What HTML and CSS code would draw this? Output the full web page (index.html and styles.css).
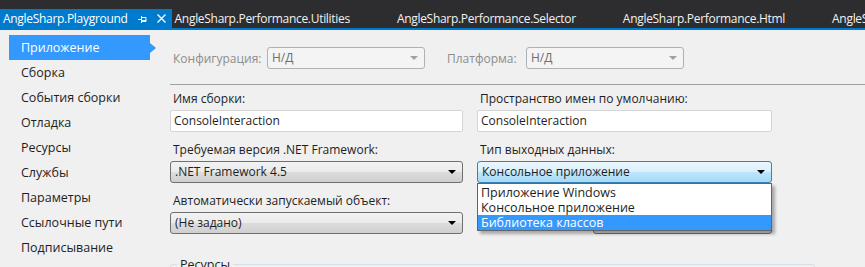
FILE: index.html
```html
<!DOCTYPE html>
<html lang="ru">
<head>
    <meta charset="UTF-8">
    <title>AngleSharp.Playground</title>
    <link rel="stylesheet" href="styles.css">
</head>
<body>
    <div class="tabbar">
        <div class="tab active">
            <span class="tab-title">AngleSharp.Playground</span>
            <span class="tab-icons">
                <svg class="pin" width="9" height="8" viewBox="0 0 9 8"><path d="M0 4.5h3.5M3.5 1v7M3.5 2.5h4.5v4h-4.5M4 5.5h4" fill="none" stroke="#fff" stroke-width="1"/></svg>
                <svg class="close" width="9" height="9" viewBox="0 0 9 9"><path d="M0.5 0.5l8 8M8.5 0.5l-8 8" stroke="#fff" stroke-width="1.4"/></svg>
            </span>
        </div>
        <div class="tab"><span class="tab-title">AngleSharp.Performance.Utilities</span><span class="tab-icons"></span></div>
        <div class="tab"><span class="tab-title">AngleSharp.Performance.Selector</span><span class="tab-icons"></span></div>
        <div class="tab"><span class="tab-title">AngleSharp.Performance.Html</span><span class="tab-icons"></span></div>
        <div class="tab"><span class="tab-title">AngleSharp.Performance.Css</span><span class="tab-icons"></span></div>
    </div>

    <div class="page">
        <ul class="sidebar">
            <li class="nav-item selected">Приложение</li>
            <li class="nav-item">Сборка</li>
            <li class="nav-item">События сборки</li>
            <li class="nav-item">Отладка</li>
            <li class="nav-item">Ресурсы</li>
            <li class="nav-item">Службы</li>
            <li class="nav-item">Параметры</li>
            <li class="nav-item">Ссылочные пути</li>
            <li class="nav-item">Подписывание</li>
        </ul>

        <div class="main">
            <div class="config-row">
                <span class="config-label">Конфигурация:</span>
                <div class="combo disabled config-combo">Н/Д</div>
                <span class="config-label platform-label">Платформа:</span>
                <div class="combo disabled config-combo">Н/Д</div>
            </div>
            <div class="separator"></div>

            <div class="fields">
                <div class="field">
                    <label>Имя сборки:</label>
                    <div class="textbox">ConsoleInteraction</div>
                </div>
                <div class="field">
                    <label>Пространство имен по умолчанию:</label>
                    <div class="textbox">ConsoleInteraction</div>
                </div>
                <div class="field">
                    <label>Требуемая версия .NET Framework:</label>
                    <div class="combo">.NET Framework 4.5</div>
                </div>
                <div class="field output-field">
                    <label>Тип выходных данных:</label>
                    <div class="combo focused">Консольное приложение</div>
                    <ul class="dropdown">
                        <li>Приложение Windows</li>
                        <li>Консольное приложение</li>
                        <li class="highlight">Библиотека классов</li>
                    </ul>
                </div>
                <div class="field">
                    <label>Автоматически запускаемый объект:</label>
                    <div class="combo">(Не задано)</div>
                </div>
                <div class="field button-field">
                    <button class="info-btn">Сведения о сборке...</button>
                </div>
            </div>

            <fieldset class="group">
                <legend>Ресурсы</legend>
            </fieldset>
        </div>
    </div>
</body>
</html>
```

FILE: styles.css
```css
* {
    margin: 0;
    padding: 0;
    box-sizing: border-box;
}

body {
    font-family: 'Open Sans', 'Noto Sans', sans-serif;
    font-size: 12px;
    color: #1e1e1e;
    background: #f0f0f0;
    width: 865px;
    height: 267px;
    overflow: hidden;
}

/* tabs */
.tabbar {
    height: 30px;
    background: #2d2d30;
    border-bottom: 2px solid #007acc;
    display: flex;
    align-items: flex-end;
    white-space: nowrap;
    overflow: hidden;
}

.tab {
    display: flex;
    align-items: center;
    height: 19px;
    padding-left: 3px;
    color: #f1f1f1;
    font-size: 12px;
    letter-spacing: -0.3px;
    flex-shrink: 0;
}

.tab.active {
    background: #007acc;
    color: #fff;
}

.tab-icons {
    width: 44px;
    height: 19px;
    display: flex;
    align-items: center;
    padding-left: 10px;
}

.tab-icons .close {
    margin-left: 10px;
}

/* layout */
.page {
    display: flex;
    height: 237px;
    overflow: hidden;
}

.sidebar {
    list-style: none;
    width: 170px;
    padding: 5px 0 0 9px;
    flex-shrink: 0;
}

.nav-item {
    position: relative;
    width: 141px;
    height: 25px;
    line-height: 25px;
    padding-left: 12px;
    font-size: 12.5px;
}

.nav-item.selected {
    background: #3399ff;
    color: #fff;
}

.nav-item.selected::after {
    content: '';
    position: absolute;
    right: -6px;
    top: 8px;
    border-left: 6px solid #3399ff;
    border-top: 5px solid transparent;
    border-bottom: 5px solid transparent;
}

.main {
    flex: 1;
    padding-top: 17px;
}

.config-row {
    display: flex;
    align-items: center;
    height: 22px;
}

.config-label {
    color: #8d8d8d;
    padding-left: 3px;
    width: 97px;
}

.platform-label {
    width: 79px;
    padding-left: 22px;
    box-sizing: content-box;
}

.combo {
    position: relative;
    height: 22px;
    line-height: 20px;
    padding-left: 4px;
    border: 1px solid #707070;
    border-radius: 3px;
    background: linear-gradient(#f2f2f2 0%, #ebebeb 50%, #dddddd 50%, #cfcfcf 100%);
    white-space: nowrap;
}

.combo::after {
    content: '';
    position: absolute;
    right: 6px;
    top: 8px;
    border-top: 4px solid #000;
    border-left: 4px solid transparent;
    border-right: 4px solid transparent;
}

.combo.disabled {
    background: #f4f4f4;
    border-color: #adb2b5;
    color: #6d6d6d;
}

.combo.disabled::after {
    border-top-color: #a0a0a0;
    right: 6px;
}

.config-combo {
    width: 158px;
}

.combo.focused {
    border-color: #3c7fb1;
    background: linear-gradient(#eaf6fd 0%, #d9f0fc 50%, #bee6fd 50%, #a7d9f5 100%);
}

.separator {
    height: 1px;
    background: #a0a0a0;
    margin-top: 15px;
}

.fields {
    display: grid;
    grid-template-columns: 293px 295px;
    column-gap: 14px;
    row-gap: 10px;
    margin-top: 6px;
}

.field {
    display: flex;
    flex-direction: column;
    gap: 3px;
    position: relative;
}

.field label {
    line-height: 16px;
    padding-left: 3px;
}

.textbox {
    height: 22px;
    line-height: 20px;
    padding-left: 3px;
    background: #fff;
    border: 1px solid #d5d5d5;
    border-radius: 2px;
}

.output-field .dropdown {
    position: absolute;
    left: 0;
    top: 41px;
    width: 100%;
    padding-top: 1px;
    list-style: none;
    background: #fff;
    border: 1px solid #646464;
    box-shadow: 3px 3px 3px rgba(0, 0, 0, 0.3);
    z-index: 2;
}

.dropdown li {
    height: 15px;
    line-height: 15px;
    padding-left: 3px;
    font-size: 12.5px;
}

.dropdown li.highlight {
    background: #3399ff;
    color: #fff;
}

.button-field {
    justify-content: flex-end;
    align-items: flex-end;
}

.info-btn {
    width: 179px;
    height: 24px;
    font-family: inherit;
    font-size: 12px;
    color: #1e1e1e;
    border: 1px solid #707070;
    border-radius: 3px;
    background: linear-gradient(#f2f2f2 0%, #ebebeb 50%, #dddddd 50%, #cfcfcf 100%);
}

.group {
    margin-top: 22px;
    width: 645px;
    height: 40px;
    border: 1px solid #d5dfe5;
    border-radius: 3px;
}

.group legend {
    margin-left: 6px;
    padding: 0 3px;
    font-size: 12.5px;
}
```
